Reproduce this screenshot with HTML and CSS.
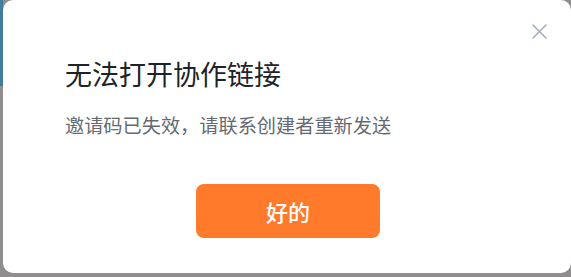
FILE: index.html
```html
<!DOCTYPE html>
<html lang="zh-CN">
<head>
  <meta charset="UTF-8" />
  <title>无法打开协作链接</title>
  <link rel="stylesheet" href="styles.css">
</head>
<body>

  <div class="dialog">
    <div class="dialog-top">
      <button class="close" aria-label="关闭">
        <svg width="15" height="15" viewBox="0 0 15 15">
          <path d="M1 1 L14 14 M14 1 L1 14" stroke="#a3abbb" stroke-width="1.5" stroke-linecap="round" fill="none"/>
        </svg>
      </button>
    </div>
    <h1 class="title">无法打开协作链接</h1>
    <p class="message">邀请码已失效，请联系创建者重新发送</p>
    <div class="actions">
      <button class="ok">好的</button>
    </div>
  </div>

</body>
</html>
```

FILE: styles.css
```css
html, body {
  height: 100%;
}
body {
  margin: 0;
  padding: 0 0 4px 3px;
  box-sizing: border-box;
  font-family: "Noto Sans CJK SC", "Noto Sans", sans-serif;
  background: linear-gradient(#417d9e, #417d9e) 0 0 / 3px 86px no-repeat, #8f8d8d;
}
.dialog {
  width: 568px;
  height: 273px;
  box-sizing: border-box;
  background: #fff;
  border-radius: 10px;
  display: flex;
  flex-direction: column;
  padding: 0 62px;
}
.dialog-top {
  display: flex;
  justify-content: flex-end;
  margin: 24px -38px 0 0;
}
.close {
  width: 15px;
  height: 15px;
  padding: 0;
  border: none;
  background: none;
  display: block;
}
.close svg {
  display: block;
}
.title {
  margin: 17px 0 0;
  font-size: 27px;
  line-height: 36px;
  font-weight: 400;
  color: #1f2329;
}
.message {
  margin: 20px 0 0;
  font-size: 19.2px;
  line-height: 26px;
  color: #646a73;
}
.actions {
  display: flex;
  justify-content: center;
  margin: 46px 0 0 2px;
}
.ok {
  width: 184px;
  height: 54px;
  border: none;
  border-radius: 8px;
  background: #ff7a2b;
  color: #fff;
  font-family: inherit;
  font-size: 22px;
  font-weight: 500;
}
```
